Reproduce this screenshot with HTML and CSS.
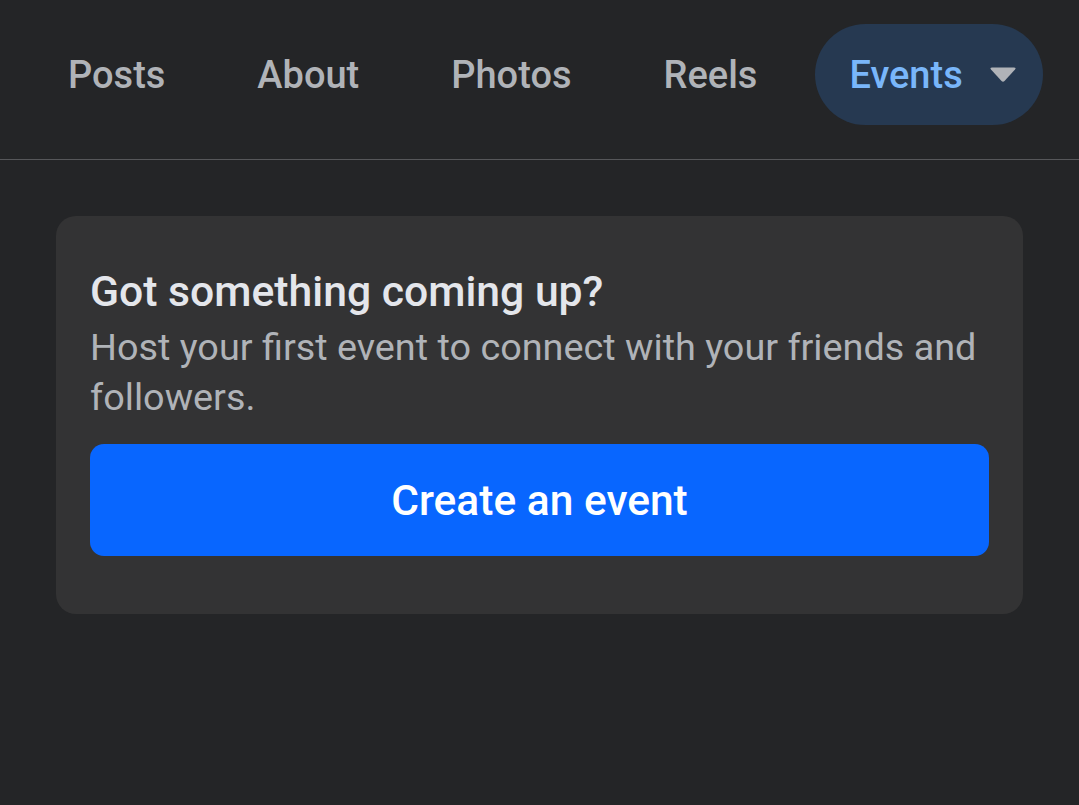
FILE: index.html
```html
<!DOCTYPE html>
<html>
<head>
<meta charset="utf-8">
<link rel="stylesheet" href="styles.css">
</head>
<body>
<nav class="tabs">
  <div class="tab">Posts</div>
  <div class="tab">About</div>
  <div class="tab">Photos</div>
  <div class="tab">Reels</div>
  <div class="tab tab-active">Events
    <svg class="caret" width="28" height="17" viewBox="0 0 28 17"><path d="M3 1.5 H25 Q27.5 1.5 26 3.5 L15.5 15 Q14 16.5 12.5 15 L2 3.5 Q0.5 1.5 3 1.5 Z" fill="#b0b3b8"/></svg>
  </div>
</nav>
<main class="content">
  <section class="card">
    <h2 class="card-title">Got something coming up?</h2>
    <p class="card-text">Host your first event to connect with your friends and followers.</p>
    <button class="btn">Create an event</button>
  </section>
</main>
</body>
</html>
```
FILE: styles.css
```css
html, body {
  margin: 0;
  padding: 0;
  background: #242527;
  font-family: Roboto, "Liberation Sans", sans-serif;
}
.tabs {
  display: flex;
  align-items: center;
  gap: 24px;
  padding: 24px 0 34px 34px;
  border-bottom: 1px solid #56575a;
}
.tab {
  display: flex;
  align-items: center;
  height: 101px;
  padding: 0 34px;
  box-sizing: border-box;
  font-size: 38px;
  font-weight: 500;
  color: #b0b3b8;
  border-radius: 51px;
}
.tab-active {
  background: #263951;
  color: #79b6fa;
  padding-right: 26px;
}
.caret {
  margin-left: 26px;
}
.content {
  padding: 56px 56px;
}
.card {
  background: #333334;
  border-radius: 20px;
  padding: 50px 34px 58px;
}
.card-title {
  margin: 0;
  font-size: 42.7px;
  font-weight: 500;
  line-height: 50px;
  color: #e4e6eb;
}
.card-text {
  margin: 6px 0 22px;
  font-size: 37.8px;
  line-height: 50px;
  color: #b0b3b8;
}
.btn {
  display: block;
  width: 100%;
  height: 112px;
  border: 0;
  border-radius: 14px;
  background: #0866ff;
  color: #fff;
  font-family: Roboto, "Liberation Sans", sans-serif;
  font-size: 42.5px;
  font-weight: 500;
}
```
